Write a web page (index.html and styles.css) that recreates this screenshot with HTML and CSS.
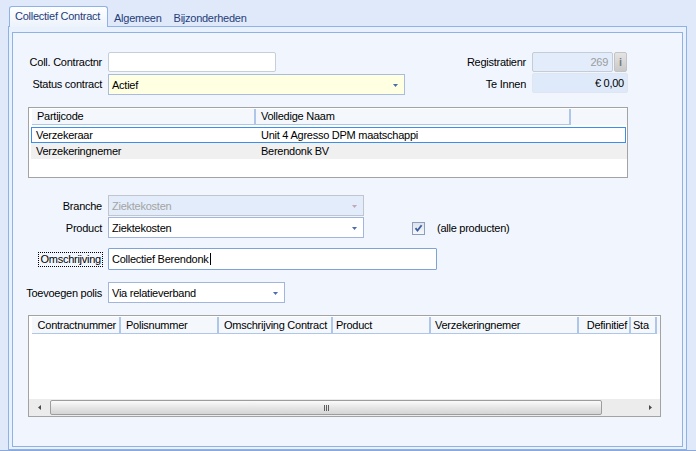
FILE: index.html
```html
<!DOCTYPE html>
<html>
<head>
<meta charset="utf-8">
<link rel="stylesheet" href="styles.css">
</head>
<body>
<div class="tabs">
  <div class="tab active">Collectief Contract</div>
  <div class="tab">Algemeen</div>
  <div class="tab">Bijzonderheden</div>
</div>
<div class="panel">
  <div class="inner">
    <div class="form-top">
      <div class="lbl">Coll. Contractnr</div>
      <div class="cell"><div class="input w-coll"></div></div>
      <div class="lbl">Registratienr</div>
      <div class="cell reg"><div class="input disabled">269</div><div class="ibtn">i</div></div>
      <div class="lbl lbl-b">Status contract</div>
      <div class="cell"><div class="combo yellow w-status"><span>Actief</span><svg class="arr" width="5" height="3" viewBox="0 0 5 3"><path d="M0 0H5L2.5 3Z" fill="#4a6ea8"/></svg></div></div>
      <div class="lbl lbl-b">Te Innen</div>
      <div class="cell"><div class="input money">€ 0,00</div></div>
    </div>

    <div class="grid1">
      <div class="gh">
        <div class="hc h1">Partijcode</div>
        <div class="hc h2">Volledige Naam</div>
        <div class="hfill"></div>
      </div>
      <div class="gr sel"><div class="c1">Verzekeraar</div><div class="c2">Unit 4 Agresso DPM maatschappi</div></div>
      <div class="gr alt"><div class="c1">Verzekeringnemer</div><div class="c2">Berendonk BV</div></div>
    </div>

    <div class="row branche">
      <div class="lbl">Branche</div>
      <div class="combo dis w-br"><span>Ziektekosten</span><svg class="arr" width="5" height="3" viewBox="0 0 5 3"><path d="M0 0H5L2.5 3Z" fill="#c4a6ba"/></svg></div>
    </div>
    <div class="row product">
      <div class="lbl">Product</div>
      <div class="combo prod w-br"><span>Ziektekosten</span><svg class="arr" width="5" height="3" viewBox="0 0 5 3"><path d="M0 0H5L2.5 3Z" fill="#4a6ea8"/></svg></div>
      <div class="chk"><svg width="11" height="11" viewBox="0 0 11 11"><path d="M2.5 5.2L4.5 7.6L8.6 2.2" fill="none" stroke="#3b5e9e" stroke-width="1.8"/></svg></div>
      <div class="chk-lbl">(alle producten)</div>
    </div>
    <div class="row omschr">
      <div class="lbl lbl-f"><span class="focus">Omschrijving</span></div>
      <div class="input edit w-om">Collectief Berendonk<span class="caret"></span></div>
    </div>
    <div class="row toev">
      <div class="lbl">Toevoegen polis</div>
      <div class="combo prod w-tv"><span>Via relatieverband</span><svg class="arr" width="5" height="3" viewBox="0 0 5 3"><path d="M0 0H5L2.5 3Z" fill="#4a6ea8"/></svg></div>
    </div>

    <div class="grid2">
      <div class="gh2">
        <div class="hc k1">Contractnummer</div>
        <div class="hc k2">Polisnummer</div>
        <div class="hc k3">Omschrijving Contract</div>
        <div class="hc k4">Product</div>
        <div class="hc k5">Verzekeringnemer</div>
        <div class="hc k6">Definitief</div>
        <div class="hc k7">Sta</div>
      </div>
      <div class="gbody"></div>
      <div class="hscroll">
        <div class="sb-btn sb-left"><svg width="3" height="5" viewBox="0 0 3 5"><path d="M3 0V5L0 2.5Z" fill="#4a4a4a"/></svg></div>
        <div class="thumb"><span class="grip"></span><span class="grip"></span><span class="grip"></span></div>
        <div class="sb-track"></div>
        <div class="sb-btn sb-right"><svg width="3" height="5" viewBox="0 0 3 5"><path d="M0 0V5L3 2.5Z" fill="#4a4a4a"/></svg></div>
      </div>
    </div>
  </div>
</div>
<div class="statusline"></div>
</body>
</html>
```
FILE: styles.css
```css
* { box-sizing: border-box; }
html, body { margin: 0; padding: 0; }
body {
  width: 696px;
  height: 451px;
  overflow: hidden;
  background: #dfe9f9;
  font-family: "Liberation Sans", Arial, sans-serif;
  font-size: 11px;
  letter-spacing: -0.25px;
  color: #000;
}

/* Tabs */
.tabs {
  display: flex;
  align-items: flex-end;
  height: 26px;
  padding-left: 9px;
  position: relative;
  z-index: 2;
}
.tab {
  height: 21px;
  margin-bottom: -1px;
  padding: 3px 6px 0 6px;
  line-height: 18px;
  color: #1f3d7a;
  white-space: nowrap;
}
.tab.active {
  width: 99px;
  padding: 0 0 0 5px;
  border: 1px solid #8db2e3;
  border-bottom: none;
  border-radius: 3px 3px 0 0;
  background: linear-gradient(#fdfeff, #edf3fc);
  margin-right: 0;
}

/* Panel */
.panel {
  margin-left: 8px;
  width: 679px;
  height: 424px;
  border: 1px solid #8db2e3;
  padding: 5px 3px 2px 3px;
  background: #e9f1fd;
}
.inner {
  height: 100%;
  border: 1px solid #8db2e3;
  background: #f1f6fe;
}
.statusline {
  height: 1px;
  background: #88a9d9;
}

/* Labels */
.lbl {
  text-align: right;
  padding-right: 6px;
  line-height: 20px;
  white-space: nowrap;
}
.lbl-b { line-height: 21px; }

/* Top form */
.form-top {
  display: grid;
  grid-template-columns: 95px 338px 86px 96px;
  grid-template-rows: 20px 21px;
  row-gap: 2px;
  margin-top: 19px;
}
.input {
  height: 20px;
  border: 1px solid #c5ced9;
  border-radius: 2px;
  background: #fff;
  white-space: nowrap;
}
.w-coll { width: 168px; }
.reg { display: flex; gap: 1px; }
.reg .input { width: 81px; }
.disabled {
  background: #e2ecfa;
  border-color: #c4ccd8;
  color: #9c9c9c;
  text-align: right;
  padding-right: 4px;
  line-height: 18px;
}
.ibtn {
  width: 13px;
  height: 20px;
  border: 1px solid #c4c4c4;
  border-radius: 2px;
  background: linear-gradient(#e4e4e4, #c9c9c9);
  color: #7c7c7c;
  font-weight: bold;
  text-align: center;
  line-height: 18px;
}
.money {
  width: 96px;
  margin-top: -1px;
  background: #deeafa;
  border-color: #e0e6ef;
  text-align: right;
  padding-right: 3px;
  line-height: 18px;
}

/* Combos */
.combo {
  height: 21px;
  display: flex;
  align-items: center;
  justify-content: space-between;
  border: 1px solid #a9bbe0;
  background: #fff;
  padding: 0 6px 0 3px;
  white-space: nowrap;
}
.combo .arr { margin-top: 1px; }
.yellow { background: #ffffe1; }
.w-status { width: 297px; }
.w-br { width: 256px; }
.w-tv { width: 177px; }
.dis {
  background: #e2ecfa;
  border-color: #c2c6cc;
  color: #a4a4a4;
}
.prod { border-color: #a2b6dc; }

/* Grid 1 */
.grid1 {
  margin: 12px 0 0 15px;
  width: 600px;
  height: 71px;
  border: 1px solid #a3a3a3;
  background: #fff;
}
.gh {
  display: flex;
  height: 16px;
  margin: 1px 0 0 3px;
  background: #f4f8fd;
}
.hc {
  border-right: 2px solid #aec7e8;
  border-bottom: 1px solid #aec7e8;
  line-height: 15px;
  padding-left: 5px;
  white-space: nowrap;
  overflow: hidden;
}
.h1 { width: 224px; }
.h2 { width: 315px; }
.hfill { flex: 1; }
.gr {
  display: flex;
  height: 16px;
  margin-left: 2px;
  line-height: 14px;
  white-space: nowrap;
}
.gr.sel {
  width: 595px;
  margin-top: 2px;
  border: 1px solid #3c8ee8;
}
.gr.alt {
  width: 596px;
  border: 1px solid #f0f0f0;
  background: #f0f0f0;
}
.gr .c1 { width: 225px; padding-left: 4px; }
.gr .c2 { padding-left: 4px; }

/* Rows */
.row { display: flex; align-items: center; }
.row .lbl { width: 95px; }
.branche { margin-top: 17px; height: 21px; }
.product { margin-top: 1px; height: 21px; }
.chk {
  width: 13px;
  height: 13px;
  margin-left: 48px;
  margin-top: 1px;
  border: 1px solid #8e9fbd;
  background: linear-gradient(#dce3ed, #f6f8fb);
  display: flex;
}
.chk-lbl { margin-left: 12px; white-space: nowrap; }
.omschr { margin-top: 10px; height: 22px; }
.lbl-f { padding-right: 5px; }
.focus {
  display: inline-block;
  border: 1px dotted #000;
  padding: 0 1px 0 1px;
  line-height: 13px;
}
.edit {
  height: 22px;
  border-color: #7fa3d6;
  border-radius: 1px;
  padding-left: 3px;
  line-height: 20px;
}
.w-om { width: 329px; }
.caret {
  display: inline-block;
  width: 1px;
  height: 12px;
  background: #000;
  vertical-align: -2px;
  margin-left: 1px;
}
.toev { margin-top: 12px; height: 21px; }

/* Grid 2 */
.grid2 {
  margin: 12px 0 0 15px;
  width: 633px;
  height: 102px;
  border: 1px solid #a3a3a3;
  background: #fff;
  display: flex;
  flex-direction: column;
}
.gh2 {
  display: flex;
  height: 17px;
  margin: 1px 0 0 3px;
  background: #f4f8fd;
}
.gh2 .hc { line-height: 16px; padding-top: 1px; line-height: 15px; }
.k1 { width: 89px; text-align: right; padding-left: 0; padding-right: 3px; }
.k2 { width: 98px; }
.k3 { width: 114px; }
.k4 { width: 98px; padding-left: 3px; }
.k5 { width: 148px; padding-left: 4px; }
.k6 { width: 52px; text-align: right; padding-left: 0; padding-right: 2px; }
.k7 { width: 26px; padding-left: 2px; }
.gbody { flex: 1; }
.hscroll {
  height: 17px;
  display: flex;
  align-items: center;
  background: #ececec;
}
.sb-btn {
  height: 17px;
  display: flex;
  align-items: center;
  justify-content: center;
}
.sb-left { width: 21px; }
.sb-right { width: 19px; }
.thumb {
  width: 552px;
  height: 15px;
  border: 1px solid #9d9d9d;
  border-radius: 2px;
  background: linear-gradient(#fbfbfb, #e6e6e6 50%, #d5d5d5);
  display: flex;
  justify-content: center;
  align-items: center;
  gap: 1px;
}
.grip {
  width: 1px;
  height: 6px;
  background: #5e5e5e;
}
.sb-track { flex: 1; }
```
